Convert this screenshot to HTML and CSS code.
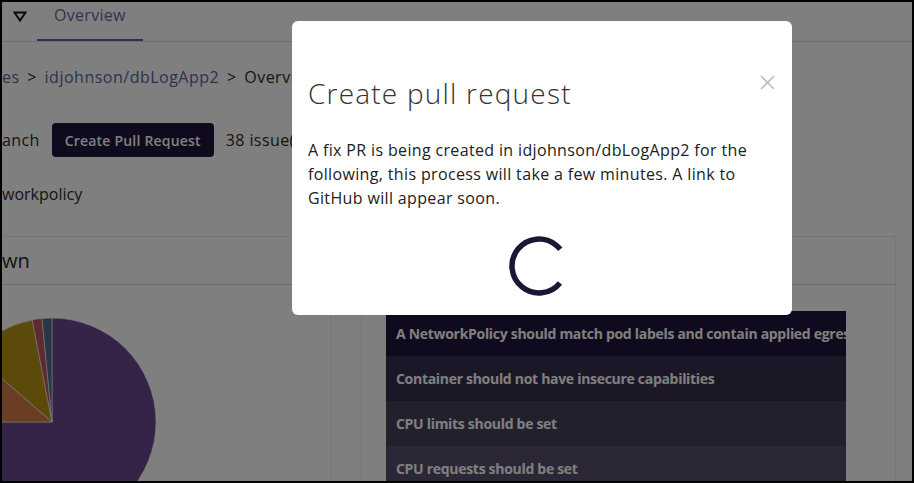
FILE: index.html
```html
<!DOCTYPE html>
<html lang="en">
<head>
    <meta charset="UTF-8">
    <meta name="viewport" content="width=device-width, initial-scale=1.0">
    <title>Overview - idjohnson/dbLogApp2</title>
    <link rel="stylesheet" href="styles.css">
</head>
<body>

    <div class="screen">
        <div class="page">
            <nav class="tabs">
                <span class="tab-toggle">
                    <svg width="14" height="11" viewBox="0 0 14 11">
                        <polygon points="1.5,1.5 12.5,1.5 7,9.5" fill="none" stroke="#111" stroke-width="2" stroke-linejoin="miter"/>
                    </svg>
                </span>
                <a class="tab active">Overview</a>
            </nav>

            <div class="content">
                <div class="crumbs">
                    <a>es</a>
                    <span class="sep">&gt;</span>
                    <a>idjohnson/dbLogApp2</a>
                    <span class="sep">&gt;</span>
                    <span class="current">Overview</span>
                </div>

                <div class="actions">
                    <span>anch</span>
                    <button class="btn-dark">Create Pull Request</button>
                    <span>38 issue(s) found</span>
                </div>

                <div class="filter">workpolicy</div>

                <div class="cards">
                    <section class="card card-chart">
                        <header class="card-head">wn</header>
                        <div class="card-body">
                            <!-- pie is cut off by the left edge -->
                            <svg class="pie" width="154" height="208" viewBox="-50 -104 154 208">
                                <path d="M0,0 L0,-104 A104,104 0 1 1 -104,0 Z" fill="#6a4890" stroke="#fff" stroke-width="0.6"/>
                                <path d="M0,0 L-104,0 A104,104 0 0 1 -78.5,-68.2 Z" fill="#d67a44" stroke="#fff" stroke-width="0.6"/>
                                <path d="M0,0 L-78.5,-68.2 A104,104 0 0 1 -19.8,-102.1 Z" fill="#b89414" stroke="#fff" stroke-width="0.6"/>
                                <path d="M0,0 L-19.8,-102.1 A104,104 0 0 1 -10,-103.5 Z" fill="#b8545e" stroke="#fff" stroke-width="0.6"/>
                                <path d="M0,0 L-10,-103.5 A104,104 0 0 1 0,-104 Z" fill="#586890" stroke="#fff" stroke-width="0.6"/>
                            </svg>
                        </div>
                    </section>

                    <section class="card card-issues">
                        <header class="card-head">Issues</header>
                        <div class="card-body">
                            <table class="issues">
                                <tr class="r1"><td>A NetworkPolicy should match pod labels and contain applied egress rules</td></tr>
                                <tr class="r2"><td>Container should not have insecure capabilities</td></tr>
                                <tr class="r3"><td>CPU limits should be set</td></tr>
                                <tr class="r4"><td>CPU requests should be set</td></tr>
                            </table>
                        </div>
                    </section>
                </div>
            </div>
        </div>

        <div class="backdrop">
            <div class="modal">
                <div class="modal-header">
                    <h2 class="modal-title">Create pull request</h2>
                    <button class="close" aria-label="Close">
                        <svg width="15" height="15" viewBox="0 0 15 15">
                            <path d="M1 1 L14 14 M14 1 L1 14" stroke="#bdbdbd" stroke-width="1.6"/>
                        </svg>
                    </button>
                </div>
                <div class="modal-body">
                    <p>A fix PR is being created in idjohnson/dbLogApp2 for the following, this process will take a few minutes. A link to GitHub will appear soon.</p>
                    <div class="spinner">
                        <svg width="60" height="60" viewBox="0 0 60 60">
                            <circle cx="30" cy="30" r="27" fill="none" stroke="#1e1535" stroke-width="5.5"
                                    stroke-dasharray="132.9 36.8" transform="rotate(39 30 30)"/>
                        </svg>
                    </div>
                </div>
            </div>
        </div>
    </div>

</body>
</html>
```

FILE: styles.css
```css
* {
    margin: 0;
    padding: 0;
    box-sizing: border-box;
    font-family: "Open Sans", Arial, sans-serif;
}

body {
    background: #000;
}

.screen {
    position: relative;
    width: 914px;
    height: 483px;
    border: 2px solid #000;
    background: #fff;
    overflow: hidden;
}

/* Tabs */
.tabs {
    display: flex;
    align-items: flex-start;
    height: 40px;
    padding-left: 11px;
    border-bottom: 1px solid #dcdcdc;
}

.tab-toggle svg {
    display: block;
    margin-top: 9px;
    margin-right: 10px;
}

.tab {
    width: 106px;
    padding: 1px 0 0 17px;
    height: 39px;
    font-size: 16px;
    line-height: 24px;
    letter-spacing: 0.3px;
    color: #646a9c;
    border-bottom: 2px solid #58629f;
}

/* Page content */
.content {
    font-size: 16px;
    line-height: 24px;
    color: #2a2a2a;
}

.crumbs {
    margin-top: 23px;
    white-space: nowrap;
    letter-spacing: 0.5px;
}

.crumbs a {
    color: #5d64a0;
}

.crumbs .sep {
    margin: 0 3px;
}

.actions {
    display: flex;
    align-items: center;
    gap: 12px;
    margin-top: 34px;
    height: 34px;
    white-space: nowrap;
    letter-spacing: 0.4px;
}

.btn-dark {
    width: 162px;
    height: 34px;
    border: none;
    border-radius: 4px;
    background: #1e143a;
    color: #fff;
    font-size: 14px;
    font-weight: 600;
    letter-spacing: 0.2px;
}

.filter {
    margin-top: 25px;
}

/* Cards */
.cards {
    display: grid;
    grid-template-columns: 329px 535px;
    gap: 30px;
    margin-top: 30px;
}

.card {
    border: 1px solid #ececec;
    height: 260px;
}

.card-chart {
    border-left: none;
}

.card-head {
    height: 48px;
    border-bottom: 1px solid #d6d6d6;
    font-size: 20px;
    line-height: 47px;
    color: #2a2a2a;
}

.card-issues .card-head {
    padding-left: 24px;
}

.card-chart .card-body {
    padding-top: 33px;
}

.pie {
    display: block;
}

.card-issues .card-body {
    padding: 26px 0 0 24px;
}

.issues {
    width: 460px;
    border-collapse: collapse;
    table-layout: fixed;
}

.issues td {
    height: 45px;
    padding: 0 10px;
    font-size: 14px;
    font-weight: 700;
    letter-spacing: -0.3px;
    color: #fff;
    white-space: nowrap;
    overflow: hidden;
}

.issues .r1 { background: #1e143a; }
.issues .r2 { background: #362e4e; }
.issues .r3 { background: #46405c; }
.issues .r4 { background: #564e6e; }

/* Modal */
.backdrop {
    position: absolute;
    inset: 0;
    background: rgba(0, 0, 0, 0.5);
}

.modal {
    position: absolute;
    left: 290px;
    top: 19px;
    width: 500px;
    height: 294px;
    background: #fff;
    border-radius: 6px;
    padding: 51px 17px 0 16px;
}

.modal-header {
    display: flex;
    justify-content: space-between;
    align-items: flex-start;
}

.modal-title {
    font-size: 28px;
    line-height: 42px;
    font-weight: 300;
    letter-spacing: 1.2px;
    color: #333;
}

.close {
    margin-top: 3px;
    border: none;
    background: none;
}

.close svg {
    display: block;
}

.modal-body {
    margin-top: 24px;
}

.modal-body p {
    font-size: 16px;
    line-height: 24px;
    letter-spacing: 0.35px;
    color: #212121;
}

.spinner {
    display: flex;
    justify-content: center;
    margin-top: 26px;
    padding-right: 6px;
}

.spinner svg {
    display: block;
}
```
